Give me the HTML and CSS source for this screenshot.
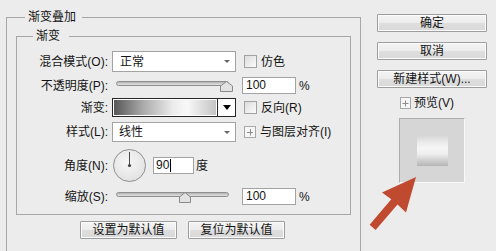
FILE: index.html
```html
<!DOCTYPE html>
<html lang="zh-CN">
<head>
<meta charset="utf-8">
<title>渐变叠加</title>
<link rel="stylesheet" href="styles.css">
</head>
<body>
<div class="dialog">
  <fieldset class="outer">
    <legend>渐变叠加</legend>
    <fieldset class="inner">
      <legend>渐变</legend>
      <div class="row r1">
        <span class="lbl">混合模式(O):</span>
        <div class="select"><span>正常</span><i class="caret"></i></div>
        <span class="check"></span><span class="ctext">仿色</span>
      </div>
      <div class="row r2">
        <span class="lbl">不透明度(P):</span>
        <div class="slider">
          <div class="track"></div>
          <svg class="thumb t100" width="13" height="11" viewBox="0 0 13 11"><path d="M0.5 10.5V5L6.5 0.5L12.5 5V10.5Z" fill="#e2e2e2" stroke="#8a8a8a"/></svg>
        </div>
        <span class="num">100</span><span class="unit">%</span>
      </div>
      <div class="row r3">
        <span class="lbl">渐变:</span>
        <div class="grad"><div class="grad-fill"></div><div class="grad-btn"><i class="tri"></i></div></div>
        <span class="check"></span><span class="ctext">反向(R)</span>
      </div>
      <div class="row r4">
        <span class="lbl">样式(L):</span>
        <div class="select s2"><span>线性</span><i class="caret"></i></div>
        <svg class="plus" width="12" height="12" viewBox="0 0 12 12"><rect x="0.5" y="0.5" width="11" height="11" fill="#f6f6f6" stroke="#a8a8a8"/><path d="M3 6.5H9M6.5 3V9.5" stroke="#8c8c8c"/></svg>
        <span class="ctext2">与图层对齐(I)</span>
      </div>
      <div class="row r5">
        <span class="lbl">角度(N):</span>
        <svg class="dial" width="33" height="33" viewBox="0 0 33 33">
          <defs><radialGradient id="dg" cx="0.45" cy="0.4" r="0.6"><stop offset="0" stop-color="#f7f7f7"/><stop offset="1" stop-color="#e2e2e2"/></radialGradient></defs>
          <circle cx="16.5" cy="16.5" r="16" fill="url(#dg)" stroke="#8e8e8e"/>
          <line x1="16.5" y1="3" x2="16.5" y2="16.5" stroke="#4a4a4a"/>
          <circle cx="16.5" cy="16.5" r="1.6" fill="#444"/>
        </svg>
        <span class="num deg">90<i class="cursor"></i></span><span class="unit2">度</span>
      </div>
      <div class="row r6">
        <span class="lbl">缩放(S):</span>
        <div class="slider">
          <div class="track"></div>
          <svg class="thumb t50" width="12" height="11" viewBox="0 0 12 11"><path d="M0.5 10.5V5L6 0.5L11.5 5V10.5Z" fill="#e2e2e2" stroke="#8a8a8a"/></svg>
        </div>
        <span class="num">100</span><span class="unit">%</span>
      </div>
    </fieldset>
    <div class="btnrow">
      <button class="btn wide">设置为默认值</button>
      <button class="btn wide">复位为默认值</button>
    </div>
  </fieldset>
  <div class="side">
    <button class="btn sbtn">确定</button>
    <button class="btn sbtn">取消</button>
    <button class="btn sbtn">新建样式(W)...</button>
    <div class="prow">
      <svg class="pplus" width="11" height="12" viewBox="0 0 11 12"><rect x="0.5" y="0.5" width="10" height="11" fill="#f6f6f6" stroke="#a8a8a8"/><path d="M2.5 6.5H8.5M5.5 3.5V9.5" stroke="#8c8c8c"/></svg>
      <span class="ptext">预览(V)</span>
    </div>
    <div class="preview"><div class="swatch"></div></div>
  </div>
</div>
<svg class="arrow" width="496" height="251" viewBox="0 0 496 251">
  <polygon points="416,177 406,212.5 397.5,204.5 375.6,230 369.6,224.8 391.3,199.3 382,192.5" fill="#c04a2f"/>
</svg>
</body>
</html>
```
FILE: styles.css
```css
html, body {
  margin: 0;
  padding: 0;
}
body {
  width: 496px;
  height: 251px;
  overflow: hidden;
  position: relative;
  background: #ececec;
  color: #141414;
  font-family: "Liberation Sans", "Noto Sans CJK SC", sans-serif;
  font-size: 12px;
  line-height: 16px;
}
.dialog {
  display: flex;
  align-items: flex-start;
}
fieldset {
  min-width: 0;
  box-sizing: border-box;
}
.outer {
  margin: 9px 0 0 6px;
  width: 355px;
  border: 1px solid #a7a7a7;
  padding: 3px 9px 40px;
}
.outer > legend {
  margin-left: 9px;
  padding: 0 6px 0 3px;
  line-height: 16px;
}
.inner {
  margin: 0;
  border: 1px solid #a7a7a7;
  padding: 7px 0 9px;
}
.inner > legend {
  margin-left: 16px;
  padding: 0 9px 0 3px;
  line-height: 16px;
}
.row {
  display: flex;
  align-items: center;
}
.r1 { height: 21px; }
.r2 { height: 17px; margin-top: 5px; }
.r3 { height: 19px; margin-top: 4px; }
.r4 { height: 20px; margin-top: 5px; }
.r5 { height: 33px; margin-top: 7px; }
.r6 { height: 17px; margin-top: 6px; }
.lbl {
  flex: none;
  width: 91px;
  margin-right: 4px;
  text-align: right;
  white-space: nowrap;
}
.select {
  flex: none;
  width: 124px;
  height: 100%;
  box-sizing: border-box;
  border: 1px solid #a3a3a3;
  background: #fff;
  display: flex;
  align-items: center;
  padding-left: 7px;
}
.s2 { padding-left: 6px; }
.caret {
  margin-left: auto;
  margin-right: 5px;
  width: 0;
  height: 0;
  border-left: 3px solid transparent;
  border-right: 3px solid transparent;
  border-top: 3px solid #666;
}
.check {
  flex: none;
  width: 13px;
  height: 13px;
  box-sizing: border-box;
  border: 1px solid #a2a2a2;
  background: linear-gradient(135deg, #dcdcdc, #fbfbfb);
  margin-left: 8px;
}
.ctext { margin-left: 4px; }
.plus { flex: none; margin-left: 8px; }
.ctext2 { margin-left: 4px; }
.slider {
  flex: none;
  position: relative;
  width: 124px;
  height: 100%;
}
.track {
  margin: 4px 0 0 4px;
  width: 113px;
  height: 5px;
  box-sizing: border-box;
  border: 1px solid #8e8e8e;
  border-radius: 3px;
  background: linear-gradient(#b4b4b4, #e2e2e2);
}
.thumb {
  position: absolute;
  top: 4px;
  display: block;
}
.t100 { left: 108px; }
.t50 { left: 67px; }
.num {
  flex: none;
  width: 54px;
  height: 17px;
  box-sizing: border-box;
  border: 1px solid #a3a3a3;
  background: #fff;
  margin-left: 6px;
  padding-left: 3px;
  line-height: 15px;
  display: flex;
  align-items: center;
}
.unit { margin-left: 3px; }
.grad {
  flex: none;
  width: 124px;
  height: 19px;
  box-sizing: border-box;
  border: 1px solid #262626;
  background: #fff;
  display: flex;
}
.grad-fill {
  flex: 1;
  margin: 1px;
  background: linear-gradient(to right, #575757 0%, #a9a9a9 28%, #ececec 58%, #f8f8f8 72%, #c4c4c4 100%);
}
.grad-btn {
  flex: none;
  width: 17px;
  border-left: 1px solid #262626;
  display: flex;
  align-items: center;
  justify-content: center;
}
.tri {
  width: 0;
  height: 0;
  border-left: 4px solid transparent;
  border-right: 4px solid transparent;
  border-top: 5px solid #000;
}
.dial {
  flex: none;
  margin-left: 1px;
  display: block;
}
.deg {
  width: 41px;
  margin-left: 7px;
  padding-left: 2px;
}
.cursor {
  display: inline-block;
  width: 1px;
  height: 13px;
  background: #000;
  margin-left: 1px;
}
.unit2 { margin-left: 2px; }
.btn {
  font: inherit;
  color: #141414;
  box-sizing: border-box;
  height: 18px;
  padding: 0;
  margin: 0;
  border: 1px solid #9d9d9d;
  border-radius: 1px;
  background: linear-gradient(#f4f4f4 0%, #ececec 50%, #dedede 51%, #d9d9d9 100%);
  box-shadow: inset 0 0 0 1px #fbfbfb;
  line-height: 15px;
  text-align: center;
}
.btnrow {
  display: flex;
  gap: 11px;
  margin-top: 6px;
  padding-left: 64px;
}
.wide { width: 97px; }
.side {
  flex: none;
  width: 110px;
  margin-left: 16px;
  padding-top: 14px;
  display: flex;
  flex-direction: column;
}
.sbtn {
  width: 110px;
  margin-bottom: 10px;
}
.prow {
  display: flex;
  align-items: center;
  height: 12px;
  margin: -1px 0 0 23px;
}
.pplus { flex: none; display: block; }
.ptext { margin-left: 3px; }
.preview {
  width: 66px;
  height: 65px;
  box-sizing: border-box;
  margin: 9px 0 0 22px;
  border: 1px solid;
  border-color: #acacac #f8f8f8 #f8f8f8 #acacac;
  background: #d6d6d6;
  display: flex;
  align-items: center;
  justify-content: center;
}
.swatch {
  width: 31px;
  height: 31px;
  background: linear-gradient(#d4d4d4 0%, #e9e9e9 22%, #f6f6f6 42%, #eeeeee 62%, #cfcfcf 82%, #b6b6b6 100%);
}
.arrow {
  position: absolute;
  left: 0;
  top: 0;
  pointer-events: none;
}
```
